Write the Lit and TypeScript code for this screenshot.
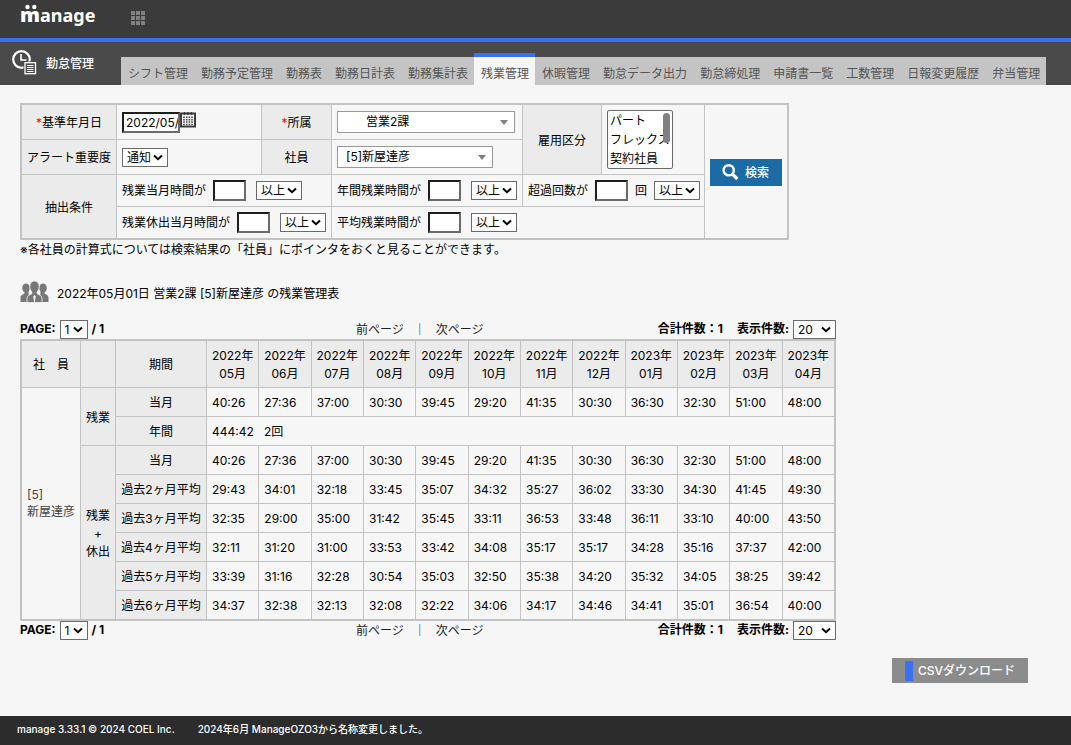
import { LitElement, html, css } from "lit";
import { customElement, property } from "lit/decorators.js";
import { classMap } from "lit/directives/class-map.js";

const TABS = [
  "シフト管理", "勤務予定管理", "勤務表", "勤務日計表", "勤務集計表", "残業管理", "休暇管理",
  "勤怠データ出力", "勤怠締処理", "申請書一覧", "工数管理", "日報変更履歴", "弁当管理",
];
const ACTIVE_TAB = "残業管理";

const MONTHS = [
  ["2022年", "05月"], ["2022年", "06月"], ["2022年", "07月"], ["2022年", "08月"],
  ["2022年", "09月"], ["2022年", "10月"], ["2022年", "11月"], ["2022年", "12月"],
  ["2023年", "01月"], ["2023年", "02月"], ["2023年", "03月"], ["2023年", "04月"],
];

const OVERTIME = "40:26 27:36 37:00 30:30 39:45 29:20 41:35 30:30 36:30 32:30 51:00 48:00".split(" ");

const WITH_HOLIDAY: [string, string[]][] = [
  ["当月", OVERTIME],
  ["過去2ヶ月平均", "29:43 34:01 32:18 33:45 35:07 34:32 35:27 36:02 33:30 34:30 41:45 49:30".split(" ")],
  ["過去3ヶ月平均", "32:35 29:00 35:00 31:42 35:45 33:11 36:53 33:48 36:11 33:10 40:00 43:50".split(" ")],
  ["過去4ヶ月平均", "32:11 31:20 31:00 33:53 33:42 34:08 35:17 35:17 34:28 35:16 37:37 42:00".split(" ")],
  ["過去5ヶ月平均", "33:39 31:16 32:28 30:54 35:03 32:50 35:38 34:20 35:32 34:05 38:25 39:42".split(" ")],
  ["過去6ヶ月平均", "34:37 32:38 32:13 32:08 32:22 34:06 34:17 34:46 34:41 35:01 36:54 40:00".split(" ")],
];

const shared = css`
  * {
    box-sizing: border-box;
  }
  a {
    color: inherit;
    text-decoration: none;
  }
  button, input, select {
    margin: 0;
    font: inherit;
    color: #000;
  }
  select {
    appearance: none;
    height: 19px;
    padding: 0 15px 0 4px;
    line-height: 17px;
    border: 1px solid #6b6b6b;
    border-radius: 0;
    background: #fff url("data:image/svg+xml,%3Csvg xmlns='http://www.w3.org/2000/svg' width='10' height='7'%3E%3Cpath d='M1 1.5L5 5.2L9 1.5' fill='none' stroke='%23000' stroke-width='2'/%3E%3C/svg%3E") no-repeat right 4px center;
  }
  .grid {
    table-layout: fixed;
    border: 1px solid #c3c3c3;
    border-spacing: 1px;
    background: #c3c3c3;
  }
  .grid th, .grid td {
    padding: 0 5px;
    background: #f6f6f6;
    font-weight: 400;
    text-align: left;
  }
  .grid th {
    padding: 2px 0 0;
    background: #ebebeb;
    text-align: center;
  }
`;

@customElement("site-header")
class SiteHeader extends LitElement {
  static styles = [shared, css`
    :host { display: block; }
    .brand {
      display: flex;
      align-items: center;
      gap: 36px;
      height: 42px;
      padding: 0 20px 2px;
      background: #3b3b3b;
      border-bottom: 4px solid #3b6ff5;
    }
    .logo {
      position: relative;
      color: #fff;
      font: 700 18px/24px "Noto Sans", sans-serif;
      padding-bottom: 6px;
    }
    .dots { position: absolute; left: 4px; top: 1px; display: block; }
    .first { font-size: 20px; font-weight: 900; }
    .apps { display: block; }
    .bar {
      display: flex;
      align-items: flex-end;
      height: 43px;
      background: #4a4a4a;
    }
    .module {
      display: flex;
      align-items: center;
      gap: 9px;
      width: 121px;
      height: 43px;
      padding: 0 0 2px 12px;
      color: #fff;
      font-weight: 500;
    }
    .module span { padding-top: 3px; }
    .tabs { display: flex; background: #c4c4c4; height: 28px; }
    .tab {
      padding: 0 6px 0 7px;
      line-height: 34px;
      height: 28px;
      color: #555;
      white-space: nowrap;
    }
    .tab.active {
      height: 32px;
      margin-top: -4px;
      border-top: 4px solid #3b6ff5;
      background: #f6f6f6;
    }
  `];

  render() {
    return html`
      <div class="brand">
        <a class="logo" href="#"><svg class="dots" width="14" height="6" viewBox="0 0 14 6"><circle cx="3.5" cy="3" r="2.2" fill="#fff"/><circle cx="10.3" cy="3" r="2.2" fill="#fff"/></svg><span class="first">m</span>anage</a>
        <svg class="apps" width="14" height="14" viewBox="0 0 14 14" fill="#808080">
          ${[0, 5, 10].map((y) => [0, 5, 10].map((x) => html`<svg x=${x} y=${y} width="4" height="4"><rect width="4" height="4"/></svg>`))}
        </svg>
      </div>
      <div class="bar">
        <div class="module">
          <svg width="25" height="25" viewBox="0 0 25 25" fill="none">
            <circle cx="9.5" cy="9.5" r="8.3" stroke="#fff" stroke-width="2.2"/>
            <path d="M9 4V10H14.500" stroke="#fff" stroke-width="1.600"/>
            <rect x="11.5" y="11.5" width="13" height="13" fill="#4a4a4a"/>
            <rect x="13" y="12.7" width="10.5" height="11" fill="#4a4a4a" stroke="#fff" stroke-width="1.3"/>
            <path d="M15 15.500H21.500M15 17.500H21.500M15 19.500H21.500M15 21.500H21.500" stroke="#fff" stroke-width="1"/>
          </svg>
          <span>勤怠管理</span>
        </div>
        <nav class="tabs">
          ${TABS.map((t) => html`<a href="#" class=${classMap({ tab: true, active: t === ACTIVE_TAB })}>${t}</a>`)}
        </nav>
      </div>
    `;
  }
}

@customElement("search-form")
class SearchForm extends LitElement {
  static styles = [shared, css`
    :host { display: block; }
    .c1 { width: 94px; }
    .c2 { width: 144px; }
    .c3 { width: 69px; }
    .c4 { width: 190px; }
    .c5 { width: 78px; }
    .c6 { width: 102px; }
    .c7 { width: 82px; }
    .grid { width: 769px; }
    .tall > * { height: 34px; }
    .short > * { height: 31px; }
    .req { color: #f00; }
    .line { display: flex; align-items: center; gap: 7px; white-space: nowrap; }
    .text {
      width: 33px;
      height: 21px;
      padding: 1px 0 1px 2px;
      border: 2px solid;
      border-color: #1e1e1e #6b6b6b #6b6b6b #1e1e1e;
      background: #fff;
    }
    .space { margin-left: 3px; }
    .date { display: flex; align-items: flex-start; }
    .date .text { width: 58px; }
    .cal { display: block; padding: 0; border: 0; background: none; }
    .cal svg { display: block; }
    .combo {
      height: 22px;
      width: 178px;
      padding-left: 28px;
      line-height: 20px;
      border-color: #999;
      background: #fff url("data:image/svg+xml,%3Csvg xmlns='http://www.w3.org/2000/svg' width='8' height='5'%3E%3Cpath d='M0 0H8L4 5Z' fill='%23808080'/%3E%3C/svg%3E") no-repeat right 6px center;
    }
    .staff { width: 156px; padding-left: 8px; }
    .list-wrap { position: relative; width: 66px; height: 59px; }
    .list {
      display: block;
      width: 66px;
      height: 59px;
      padding: 0;
      border-radius: 2px;
      background: #fff;
      overflow-y: scroll;
      scrollbar-width: none;
    }
    .list option { height: 19px; min-height: 0; padding: 0 2px; line-height: 19px; }
    .thumb {
      position: absolute;
      right: 3px;
      top: 3px;
      width: 7px;
      height: 30px;
      border-radius: 4px;
      background: #808080;
      pointer-events: none;
    }
    .grid .action { padding-top: 2px; }
    .search {
      display: flex;
      align-items: center;
      gap: 6px;
      width: 72px;
      height: 27px;
      padding: 0 12px;
      border: 0;
      background: #1d6ba5;
      color: #fff;
      font-weight: 500;
      white-space: nowrap;
    }
    .search svg { flex: none; }
  `];

  private condition(id: string, label: string, unit = "") {
    return html`<div class="line">
      <label for=${id}>${label}</label>
      <input class="text" id=${id} type="text">
      ${unit
        ? html`<span>${unit}</span><select aria-label="${label}の条件"><option>以上</option></select>`
        : html`<select class="space" aria-label="${label}の条件"><option>以上</option></select>`}
    </div>`;
  }

  render() {
    return html`
      <table class="grid">
        <colgroup>
          <col class="c1"><col class="c2"><col class="c3"><col class="c4"><col class="c5"><col class="c6"><col class="c7">
        </colgroup>
        <tbody>
          <tr class="tall">
            <th><label for="date"><span class="req">*</span>基準年月日</label></th>
            <td>
              <div class="date">
                <input class="text" id="date" type="text" value="2022/05/01">
                <button class="cal" type="button" aria-label="カレンダー">
                  <svg width="16" height="16" viewBox="0 0 16 16">
                    <path d="M1 1.500H15V14.500H1Z" fill="#f6f6f6" stroke="#3c3c3c" stroke-width="2"/>
                    <path d="M4.500 0V3M8 0V3M11.500 0V3" stroke="#3c3c3c" stroke-width="1.600"/>
                    <path d="M4 4.500V13M6.700 4.500V13M9.400 4.500V13M12 4.500V13" stroke="#3c3c3c" stroke-width="1.500" stroke-dasharray="1.500 0.900"/>
                  </svg>
                </button>
              </div>
            </td>
            <th><label for="dept"><span class="req">*</span>所属</label></th>
            <td><select class="combo" id="dept"><option>営業2課</option></select></td>
            <th rowspan="2"><label for="kind">雇用区分</label></th>
            <td rowspan="2">
              <div class="list-wrap">
                <select class="list" id="kind" multiple size="3">
                  <option>パート</option><option>フレックス</option><option>契約社員</option>
                </select>
                <span class="thumb"></span>
              </div>
            </td>
            <td class="action" rowspan="4">
              <button class="search" type="button">
                <svg width="17" height="17" viewBox="0 0 17 17" fill="none" stroke="#fff">
                  <circle cx="6.7" cy="6.3" r="5.1" stroke-width="2.4"/>
                  <path d="M10.500 10.200L15.300 15" stroke-width="3.200"/>
                </svg>
                検索
              </button>
            </td>
          </tr>
          <tr class="tall">
            <th><label for="alert">アラート重要度</label></th>
            <td><select id="alert"><option>通知</option></select></td>
            <th><label for="staff">社員</label></th>
            <td><select class="combo staff" id="staff"><option>[5]新屋達彦</option></select></td>
          </tr>
          <tr class="short">
            <th rowspan="2">抽出条件</th>
            <td colspan="2">${this.condition("ot", "残業当月時間が")}</td>
            <td>${this.condition("year", "年間残業時間が")}</td>
            <td colspan="2">${this.condition("over", "超過回数が", "回")}</td>
          </tr>
          <tr class="short">
            <td colspan="2">${this.condition("hol", "残業休出当月時間が")}</td>
            <td colspan="3">${this.condition("avg", "平均残業時間が")}</td>
          </tr>
        </tbody>
      </table>
    `;
  }
}

@customElement("result-pager")
class ResultPager extends LitElement {
  static styles = [shared, css`
    :host { display: block; }
    .pager {
      display: grid;
      grid-template-columns: 336px 1fr auto;
      align-items: center;
      height: 19px;
      line-height: 19px;
    }
    .part { display: flex; gap: 4px; font-weight: 700; line-height: 17px; }
    .part select { font-weight: 400; }
    .num { width: 28px; }
    .size { width: 43px; }
    .total { margin-right: 10px; }
    .links { display: flex; gap: 10px; color: #222; }
  `];

  render() {
    return html`
      <div class="pager">
        <div class="part">
          <label for="page">PAGE:</label>
          <select class="num" id="page"><option>1</option></select>
          <span>/ 1</span>
        </div>
        <div class="links"><a href="#">前ページ</a><span>｜</span><a href="#">次ページ</a></div>
        <div class="part">
          <span class="total">合計件数：1</span>
          <label for="size">表示件数:</label>
          <select class="size" id="size"><option>20</option></select>
        </div>
      </div>
    `;
  }
}

@customElement("overtime-table")
class OvertimeTable extends LitElement {
  static styles = [shared, css`
    :host { display: block; }
    .grid { width: 100%; }
    .c1 { width: 58px; }
    .c2 { width: 34px; }
    .c3 { width: 90px; }
    .head > th { height: 46px; }
    .row > th, .row > td { height: 28px; }
    .grid td { padding-top: 2px; }
    .grid .name { padding: 0 5px 2px; color: #444; line-height: 17px; white-space: nowrap; }
    .grid .wide { white-space: pre; }
  `];

  render() {
    return html`
      <table class="grid">
        <colgroup><col class="c1"><col class="c2"><col class="c3">${MONTHS.map(() => html`<col>`)}</colgroup>
        <thead>
          <tr class="head">
            <th>社　員</th><th></th><th>期間</th>
            ${MONTHS.map(([y, m]) => html`<th>${y}<br>${m}</th>`)}
          </tr>
        </thead>
        <tbody>
          <tr class="row">
            <td class="name" rowspan="8">[5]<br>新屋達彦</td>
            <th rowspan="2">残業</th>
            <th>当月</th>
            ${OVERTIME.map((v) => html`<td>${v}</td>`)}
          </tr>
          <tr class="row">
            <th>年間</th>
            <td class="wide" colspan="12">444:42&nbsp;&nbsp;&nbsp;2回</td>
          </tr>
          ${WITH_HOLIDAY.map(([label, values], i) => html`
            <tr class="row">
              ${i === 0 ? html`<th rowspan="6">残業<br>+<br>休出</th>` : ""}
              <th>${label}</th>
              ${values.map((v) => html`<td>${v}</td>`)}
            </tr>`)}
        </tbody>
      </table>
    `;
  }
}

@customElement("app-root")
class AppRoot extends LitElement {
  static styles = [shared, css`
    :host {
      display: flex;
      flex-direction: column;
      min-height: 100vh;
      background: #f6f6f6;
      color: #000;
      font: 400 12px/18px Inter, "Noto Sans CJK JP", sans-serif;
    }
    .main { flex: 1; padding: 18px 43px 18px 20px; }
    .note { margin: 1px 0 0; }
    .title {
      display: flex;
      align-items: center;
      gap: 8px;
      height: 22px;
      margin: 22px 0 17px;
      font-size: 12px;
      font-weight: 400;
    }
    .title span { padding-top: 3px; }
    .result { width: 816px; }
    .actions { display: flex; justify-content: flex-end; margin-top: 18px; }
    .csv {
      display: flex;
      align-items: center;
      gap: 5px;
      height: 25px;
      padding: 0 13px;
      border: 0;
      background: #8c8c8c;
      color: #fff;
      font-weight: 500;
    }
    .mark { width: 8px; height: 20px; background: #3b6ff5; }
    .footer {
      display: flex;
      gap: 23px;
      padding: 0 17px 2px;
      background: #2c2c2c;
      color: #fff;
      font-size: 10px;
      font-weight: 500;
      line-height: 27px;
    }
  `];

  render() {
    return html`
      <site-header></site-header>
      <main class="main">
        <search-form></search-form>
        <p class="note">※各社員の計算式については検索結果の「社員」にポインタをおくと見ることができます。</p>
        <h1 class="title">
          <svg width="29" height="22" viewBox="0 0 29 22" fill="#777">
            <ellipse cx="6" cy="7" rx="3.8" ry="4.6"/>
            <path d="M0.500 21V16.500C0.500 14 3 13.500 4.500 12.500V10H8.500V12.500C9.500 13.300 8 14.500 8 21Z"/>
            <ellipse cx="23" cy="7" rx="3.8" ry="4.6"/>
            <path d="M28.500 21V16.500C28.500 14 26 13.500 24.500 12.500V10H20.500V12.500C19.500 13.300 21 14.500 21 21Z"/>
            <path d="M14.500 0C17.500 0 19.200 2.300 19.200 5.500C19.200 8 18.300 10 17 11V12.500C18.500 14 22 14 22 17.500V21.500H7V17.500C7 14 10.500 14 12 12.500V11C10.700 10 9.800 8 9.800 5.500C9.800 2.300 11.500 0 14.500 0Z" stroke="#f6f6f6" stroke-width="0.8"/>
            <path d="M14.500 14L13.300 15.500L14.100 21H14.900L15.700 15.500Z" fill="#f6f6f6"/>
          </svg>
          <span>2022年05月01日 営業2課 [5]新屋達彦 の残業管理表</span>
        </h1>
        <div class="result">
          <result-pager></result-pager>
          <overtime-table></overtime-table>
          <result-pager></result-pager>
        </div>
        <div class="actions">
          <button class="csv" type="button"><span class="mark"></span>CSVダウンロード</button>
        </div>
      </main>
      <footer class="footer">
        <span>manage 3.33.1 © 2024 COEL Inc.</span>
        <span>2024年6月 ManageOZO3から名称変更しました。</span>
      </footer>
    `;
  }
}
